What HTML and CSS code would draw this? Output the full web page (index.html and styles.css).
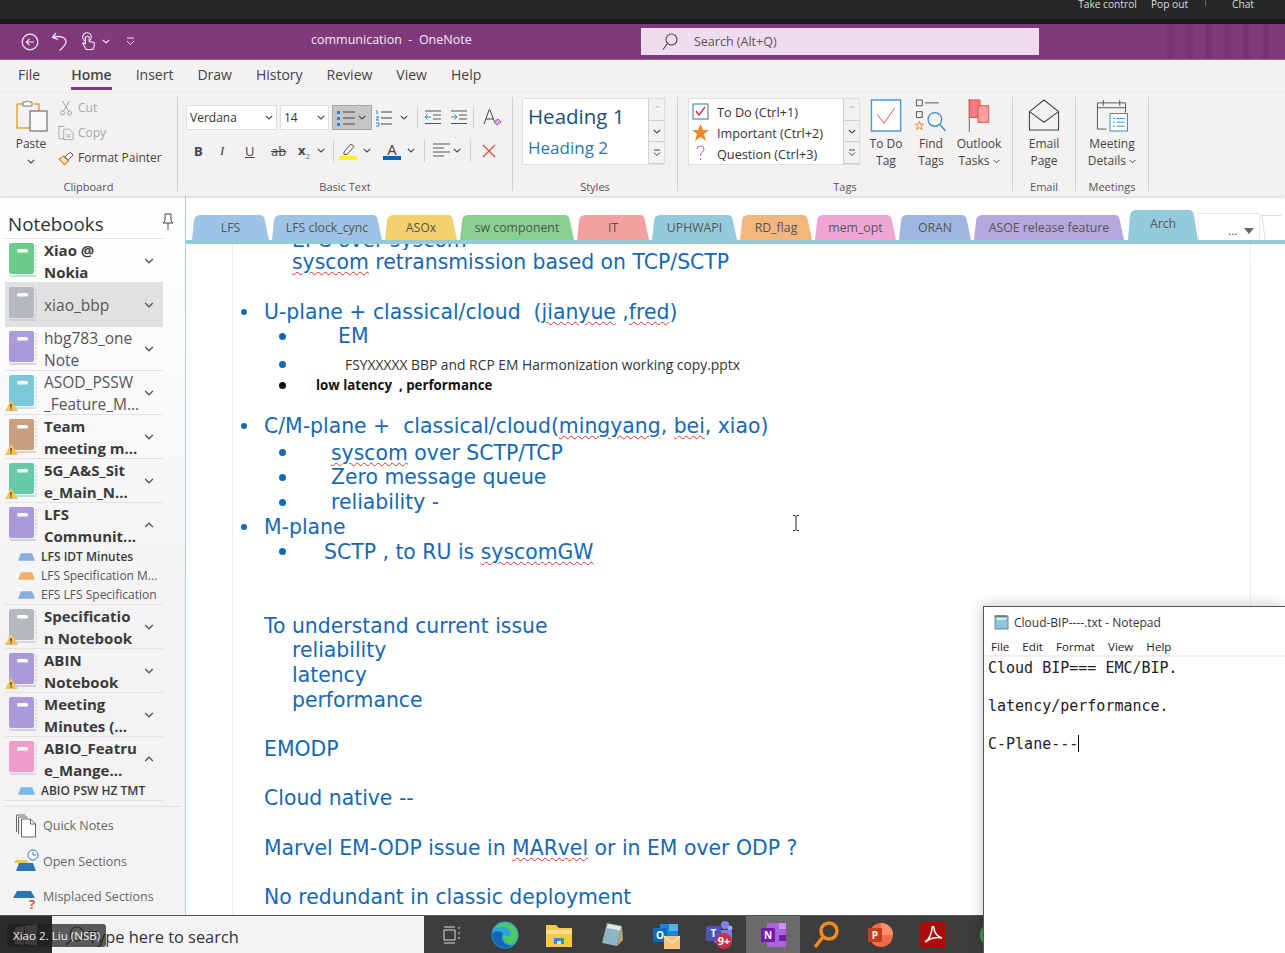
FILE: index.html
```html
<!DOCTYPE html>
<html lang="en">

<head>
    <meta charset="UTF-8">
    <title>communication - OneNote</title>
    <link rel="stylesheet" href="styles.css">
</head>

<body>
    <!-- shared icons -->
    <svg class="defs" width="0" height="0">
        <symbol id="book" viewBox="0 0 34 38">
            <path d="M5 33h26v2H7q-3 0-3-3z" fill="currentColor" opacity=".45"/>
            <rect x="4" y="1" width="25" height="31" rx="2" fill="currentColor"/>
            <rect x="12" y="7" width="11" height="3.5" rx="1.5" fill="#fff"/>
            <path d="M31 3v29" stroke="currentColor" stroke-width="1" stroke-dasharray="2 1.5" opacity=".7"/>
        </symbol>
        <symbol id="warn" viewBox="0 0 34 38">
            <path d="M6 26l7 11H0z" fill="#f0c35e"/>
            <path d="M6 30v3.500M6 34.500v1.200" stroke="#4a3a10" stroke-width="1.300"/>
        </symbol>
        <symbol id="section" viewBox="0 0 18 8">
            <path d="M3 0h12l3 8H0z" fill="currentColor"/>
        </symbol>
        <symbol id="chev" viewBox="0 0 8 5">
            <path d="M.8.8L4 4l3.200-3.200" fill="none" stroke="currentColor" stroke-width="1.100"/>
        </symbol>
    </svg>

    <div class="meeting-bar">
        <span>Take control</span>
        <span>Pop out</span>
        <i class="meeting-sep"></i>
        <span>Chat</span>
    </div>

    <header class="title-bar">
        <div class="quick-icons">
            <svg width="18" height="18" viewBox="0 0 18 18" fill="none" stroke="#f1e6f0" stroke-width="1.200"><circle cx="9" cy="9" r="7.800"/><path d="M13 9H5.500M8.500 5.800L5.300 9l3.200 3.200"/></svg>
            <svg width="18" height="20" viewBox="0 0 18 20" fill="none" stroke="#f1e6f0" stroke-width="1.300"><path d="M5 1L1.500 5.500 7 7.500M2 5.500c6-2 12-1 13 3.500 .7 3.500-3 6.500-6.500 9.500"/></svg>
            <svg width="14" height="20" viewBox="0 0 14 20" fill="none" stroke="#f1e6f0" stroke-width="1.100"><circle cx="6" cy="5" r="4.300"/><path d="M4.500 5v7l-2-1.500-.8 1 3.500 6h6.500l1.500-3v-4l-5-1V5q-1.800-1.500-3.700 0z" fill="#80397b"/></svg>
            <svg class="chev-sm" width="8" height="5"><use href="#chev"/></svg>
            <svg class="customize" width="9" height="9" viewBox="0 0 9 9" fill="none" stroke="#f1e6f0"><path d="M1 1h7M1 4l3.500 3.500L8 4"/></svg>
        </div>
        <div class="doc-title">communication &nbsp;-&nbsp; OneNote</div>
        <div class="search-box">
            <svg width="16" height="18" viewBox="0 0 16 18" fill="none" stroke="#444" stroke-width="1.100"><circle cx="9.500" cy="6.500" r="5.500"/><path d="M5.500 10.500L1 16.500"/></svg>
            <span>Search (Alt+Q)</span>
        </div>
        <div class="title-stripes"><i></i><i></i><i></i><i></i><i></i><i></i></div>
    </header>

    <nav class="menu-tabs">
        <a class="tab-file">File</a>
        <a class="active">Home</a>
        <a>Insert</a>
        <a>Draw</a>
        <a>History</a>
        <a>Review</a>
        <a>View</a>
        <a>Help</a>
    </nav>

    <section class="ribbon">
        <!-- Clipboard -->
        <div class="group group-clipboard">
            <div class="group-body clip-body">
                <div class="paste">
                    <svg width="33" height="33" viewBox="0 0 33 33" fill="none"><path d="M2 5h6M19 5h5v24H2V5" stroke="#e8a33d" stroke-width="1.500"/><path d="M8 7V3h3q1-3 3 0h3v4z" fill="#fff" stroke="#777"/><rect x="15" y="12" width="17" height="20" fill="#f8f8f8" stroke="#555"/></svg>
                    <span>Paste</span>
                    <svg class="chev-dark" width="8" height="5"><use href="#chev"/></svg>
                </div>
                <div class="clip-actions">
                    <div class="clip-item muted">
                        <svg width="16" height="16" viewBox="0 0 16 16" fill="none" stroke="#a8a8a8"><path d="M4 1l6 10M11 1L5 11"/><circle cx="4" cy="13" r="2"/><circle cx="11" cy="13" r="2"/></svg>
                        <span>Cut</span>
                    </div>
                    <div class="clip-item muted">
                        <svg width="18" height="16" viewBox="0 0 18 16" fill="none" stroke="#a8a8a8"><path d="M7 1H1v13h6M6 4h6l4 4v7H6z"/><path d="M9 10h4M9 12h4"/></svg>
                        <span>Copy</span>
                    </div>
                    <div class="clip-item">
                        <svg width="18" height="16" viewBox="0 0 18 16" fill="none"><path d="M1 9l5-3 5 5-4 4z" fill="#fbe3c6" stroke="#e07b20" stroke-width="1.200"/><path d="M7 7l6-5 3 3-5 5z" fill="#fff" stroke="#444"/></svg>
                        <span>Format Painter</span>
                    </div>
                </div>
            </div>
            <div class="group-label">Clipboard</div>
        </div>

        <!-- Basic Text -->
        <div class="group group-text">
            <div class="group-body text-body">
                <div class="text-row">
                    <div class="combo combo-font"><span>Verdana</span><svg width="8" height="5"><use href="#chev"/></svg></div>
                    <div class="combo combo-size"><span>14</span><svg width="8" height="5"><use href="#chev"/></svg></div>
                    <div class="list-btn selected">
                        <svg width="20" height="18" viewBox="0 0 20 18"><path d="M1 2h3v3H1zM1 8h3v3H1zM1 14h3v3H1z" fill="#1e88d2"/><path d="M7 3h12M7 9h12M7 15h12" stroke="#444"/></svg>
                        <svg width="8" height="5"><use href="#chev"/></svg>
                    </div>
                    <div class="list-btn">
                        <svg width="18" height="18" viewBox="0 0 18 18"><path d="M2 1v4M1 8h3L1 11h3M1 14h3v3H1" fill="none" stroke="#1e88d2"/><path d="M6 3h11M6 9h11M6 15h11" stroke="#444"/></svg>
                        <svg width="8" height="5"><use href="#chev"/></svg>
                    </div>
                    <i class="vsep vsep-list"></i>
                    <svg class="indent-out" width="17" height="16" viewBox="0 0 17 16" fill="none"><path d="M1 1h16M9 5h8M9 9h8M1 13.500h16" stroke="#555"/><path d="M7 7H1m2.500-2.500L1 7l2.500 2.500" stroke="#1e88d2"/></svg>
                    <svg class="indent-in" width="17" height="16" viewBox="0 0 17 16" fill="none"><path d="M1 1h16M9 5h8M9 9h8M1 13.500h16" stroke="#555"/><path d="M1 7h6M4.500 4.500L7 7 4.500 9.500" stroke="#1e88d2"/></svg>
                    <i class="vsep"></i>
                    <svg class="clear-fmt" width="18" height="18" viewBox="0 0 18 18" fill="none"><path d="M1 15L6 1h1l5 13M3 10h7" stroke="#444"/><path d="M11 13l4-3 3 3-4 3z" fill="#d9b5ec" stroke="#9a4fc0"/></svg>
                </div>
                <div class="text-row text-row-two">
                    <b class="fmt fmt-bold">B</b>
                    <i class="fmt fmt-italic">I</i>
                    <u class="fmt fmt-under">U</u>
                    <s class="fmt fmt-strike">ab</s>
                    <span class="fmt fmt-sub"><b>x</b><sub>2</sub></span>
                    <svg class="chev-tight" width="8" height="5"><use href="#chev"/></svg>
                    <i class="vsep vsep-narrow"></i>
                    <svg width="18" height="18" viewBox="0 0 18 18"><path d="M5 10l7-8 3 2.500-7 8H5z" fill="none" stroke="#555"/><rect y="14" width="18" height="4" fill="#ffee33"/></svg>
                    <svg class="chev-gap" width="8" height="5"><use href="#chev"/></svg>
                    <span class="font-color"><span>A</span></span>
                    <svg class="chev-tight" width="8" height="5"><use href="#chev"/></svg>
                    <i class="vsep vsep-wide"></i>
                    <svg width="17" height="15" viewBox="0 0 17 15"><path d="M0 1h17M0 5h11M0 9h17M0 13h11" stroke="#555"/></svg>
                    <svg class="chev-tight" width="8" height="5"><use href="#chev"/></svg>
                    <i class="vsep vsep-wide"></i>
                    <svg class="erase" width="14" height="14" viewBox="0 0 14 14"><path d="M1 1l12 12M13 1L1 13" stroke="#d9503f" stroke-width="1.300"/></svg>
                </div>
            </div>
            <div class="group-label">Basic Text</div>
        </div>

        <!-- Styles -->
        <div class="group group-styles">
            <div class="group-body">
                <div class="gallery gallery-styles">
                    <div class="gallery-items">
                        <div class="style-one">Heading 1</div>
                        <div class="style-two">Heading 2</div>
                    </div>
                    <div class="gallery-scroll"><span>&#8963;</span><span><svg width="8" height="5"><use href="#chev"/></svg></span><span><svg width="8" height="8" viewBox="0 0 8 8" fill="none" stroke="#444"><path d="M1 1h6M1 3.500l3 3 3-3"/></svg></span></div>
                </div>
            </div>
            <div class="group-label">Styles</div>
        </div>

        <!-- Tags -->
        <div class="group group-tags">
            <div class="group-body tags-body">
                <div class="gallery gallery-tags">
                    <div class="gallery-items tag-items">
                        <div class="tag-row">
                            <svg width="17" height="17" viewBox="0 0 17 17" fill="#fff"><rect x="1" y="1" width="15" height="15" stroke="#3a6f9c"/><path d="M4 8l3 4 6-8" fill="none" stroke="#c8272c" stroke-width="1.300"/></svg>
                            <span>To Do (Ctrl+1)</span>
                        </div>
                        <div class="tag-row">
                            <svg width="17" height="17" viewBox="0 0 17 17"><path d="M8.500 0l2.500 6h6l-5 4 2 7-5.500-4L3 17l2-7-5-4h6z" fill="#ee8a2c"/></svg>
                            <span>Important (Ctrl+2)</span>
                        </div>
                        <div class="tag-row">
                            <svg width="17" height="17" viewBox="0 0 17 17" fill="none" stroke="#a35fc4"><path d="M5 4q0-3 3.500-3T12 4q0 2-2 3.500T8.500 11M8.500 13v2"/></svg>
                            <span>Question (Ctrl+3)</span>
                        </div>
                    </div>
                    <div class="gallery-scroll"><span>&#8963;</span><span><svg width="8" height="5"><use href="#chev"/></svg></span><span><svg width="8" height="8" viewBox="0 0 8 8" fill="none" stroke="#444"><path d="M1 1h6M1 3.500l3 3 3-3"/></svg></span></div>
                </div>
                <div class="big-btn btn-todo">
                    <svg width="32" height="33" viewBox="0 0 32 34" fill="#fff"><rect x="1" y="1" width="30" height="32" stroke="#4a9ad4" stroke-width="1.500"/><path d="M7 16l7 9 11-16" fill="none" stroke="#d9503f"/></svg>
                    <span>To Do<br>Tag</span>
                </div>
                <div class="big-btn btn-find">
                    <svg width="32" height="33" viewBox="0 0 32 34" fill="none"><path d="M1 1h6v6H1zM1 13h6v6H1zM10 4h14" stroke="#555"/><path d="M4 23l1.300 3h3l-2.500 2 1 3.500L4 29.500 1.200 31.500l1-3.500L0 26h3z" fill="none" stroke="#e08a2c"/><circle cx="20" cy="21" r="7" stroke="#3a86c4" stroke-width="1.300"/><path d="M25 26l6 7" stroke="#3a86c4" stroke-width="1.300"/></svg>
                    <span>Find<br>Tags</span>
                </div>
                <div class="big-btn btn-tasks">
                    <svg width="24" height="33" viewBox="0 0 24 34"><path d="M2 0v34" stroke="#666"/><rect x="2" y="1" width="11" height="18" fill="#f47b85" stroke="#d9503f"/><rect x="11" y="7" width="11" height="17" fill="#f9a0a4" stroke="#d9503f"/></svg>
                    <span>Outlook<br>Tasks <svg width="7" height="5"><use href="#chev"/></svg></span>
                </div>
            </div>
            <div class="group-label">Tags</div>
        </div>

        <!-- Email -->
        <div class="group group-email">
            <div class="group-body">
                <div class="big-btn">
                    <svg width="32" height="33" viewBox="0 0 32 34" fill="none" stroke="#444" stroke-width="1.100"><path d="M1 13L16 1l15 12v19H1zM1 13l15 11 15-11"/></svg>
                    <span>Email<br>Page</span>
                </div>
            </div>
            <div class="group-label">Email</div>
        </div>

        <!-- Meetings -->
        <div class="group group-meetings">
            <div class="group-body">
                <div class="big-btn">
                    <svg width="34" height="33" viewBox="0 0 34 34" fill="none"><path d="M11 31H2V4h29v10M2 9h29M8 1v6M25 1v6" stroke="#555"/><rect x="15" y="15" width="18" height="18" fill="#fff" stroke="#3a86c4"/><path d="M18 20h2M22 20h8M18 24h2M22 24h8M18 28h2M22 28h8" stroke="#3a86c4"/></svg>
                    <span>Meeting<br>Details <svg width="7" height="5"><use href="#chev"/></svg></span>
                </div>
            </div>
            <div class="group-label">Meetings</div>
        </div>
    </section>

    <div class="workspace">
        <aside class="sidebar">
            <div class="side-head">
                <span>Notebooks</span>
                <svg width="12" height="17" viewBox="0 0 12 17" fill="none" stroke="#444"><path d="M3 1h6v7l2 2H1l2-2zM6 10v7"/></svg>
            </div>
            <div class="notebook-list">
                <div class="nb bold green"><span class="nb-icon"><svg width="34" height="38"><use href="#book"/></svg></span><span class="nb-name">Xiao @<br>Nokia</span><svg class="nb-chev" width="10" height="6"><use href="#chev"/></svg></div>
                <div class="nb grey selected"><span class="nb-icon"><svg width="34" height="38"><use href="#book"/></svg></span><span class="nb-name">xiao_bbp</span><svg class="nb-chev" width="10" height="6"><use href="#chev"/></svg></div>
                <div class="nb violet"><span class="nb-icon"><svg width="34" height="38"><use href="#book"/></svg></span><span class="nb-name">hbg783_one<br>Note</span><svg class="nb-chev" width="10" height="6"><use href="#chev"/></svg></div>
                <div class="nb teal"><span class="nb-icon"><svg width="34" height="38"><use href="#book"/><use href="#warn"/></svg></span><span class="nb-name">ASOD_PSSW<br>_Feature_M...</span><svg class="nb-chev" width="10" height="6"><use href="#chev"/></svg></div>
                <div class="nb bold tan"><span class="nb-icon"><svg width="34" height="38"><use href="#book"/><use href="#warn"/></svg></span><span class="nb-name">Team<br>meeting m...</span><svg class="nb-chev" width="10" height="6"><use href="#chev"/></svg></div>
                <div class="nb bold mint"><span class="nb-icon"><svg width="34" height="38"><use href="#book"/><use href="#warn"/></svg></span><span class="nb-name">5G_A&amp;S_Sit<br>e_Main_N...</span><svg class="nb-chev" width="10" height="6"><use href="#chev"/></svg></div>
                <div class="nb bold violet open"><span class="nb-icon"><svg width="34" height="38"><use href="#book"/></svg></span><span class="nb-name">LFS<br>Communit...</span><svg class="nb-chev up" width="10" height="6"><use href="#chev"/></svg></div>
                <div class="sec-group">
                    <div class="sec bold"><svg class="blue" width="17" height="8"><use href="#section"/></svg>LFS IDT Minutes</div>
                    <div class="sec"><svg class="orange" width="17" height="8"><use href="#section"/></svg>LFS Specification M...</div>
                    <div class="sec"><svg class="blue" width="17" height="8"><use href="#section"/></svg>EFS LFS Specification</div>
                </div>
                <div class="nb bold grey"><span class="nb-icon"><svg width="34" height="38"><use href="#book"/><use href="#warn"/></svg></span><span class="nb-name">Specificatio<br>n Notebook</span><svg class="nb-chev" width="10" height="6"><use href="#chev"/></svg></div>
                <div class="nb bold violet"><span class="nb-icon"><svg width="34" height="38"><use href="#book"/><use href="#warn"/></svg></span><span class="nb-name">ABIN<br>Notebook</span><svg class="nb-chev" width="10" height="6"><use href="#chev"/></svg></div>
                <div class="nb bold violet"><span class="nb-icon"><svg width="34" height="38"><use href="#book"/></svg></span><span class="nb-name">Meeting<br>Minutes (...</span><svg class="nb-chev" width="10" height="6"><use href="#chev"/></svg></div>
                <div class="nb bold pink open"><span class="nb-icon"><svg width="34" height="38"><use href="#book"/></svg></span><span class="nb-name">ABIO_Featru<br>e_Mange...</span><svg class="nb-chev up" width="10" height="6"><use href="#chev"/></svg></div>
                <div class="sec-group">
                    <div class="sec bold"><svg class="sky" width="17" height="8"><use href="#section"/></svg>ABIO PSW HZ TMT</div>
                </div>
            </div>
            <div class="side-links">
                <div class="side-link">
                    <svg width="21" height="24" viewBox="0 0 21 24" fill="none" stroke="#666"><path d="M1 18V1h9M3 20V3h9"/><path d="M6 23V5h9l5 5v13z" fill="#fff"/><path d="M15 5v5h5"/></svg>
                    <span>Quick Notes</span>
                </div>
                <div class="side-link">
                    <svg width="26" height="24" viewBox="0 0 26 24"><path d="M3 11h10l3 3H1z" fill="#f0c35e"/><path d="M6 15h14l3 8H3z" fill="#2e75b5" transform="translate(0 -1)"/><circle cx="20" cy="6" r="5" fill="#fff" stroke="#2e75b5"/><path d="M20 3v3h3" fill="none" stroke="#2e75b5"/></svg>
                    <span>Open Sections</span>
                </div>
                <div class="side-link">
                    <svg width="26" height="24" viewBox="0 0 26 24"><path d="M4 6h14l4 7H0z" fill="#2e75b5"/><text x="16" y="24" class="q-mark">?</text></svg>
                    <span>Misplaced Sections</span>
                </div>
            </div>
        </aside>

        <main class="note-area">
            <div class="section-tabs">
                <div class="stab blue-tab tw-75">LFS</div>
                <div class="stab blue-tab tw-110">LFS clock_cync</div>
                <div class="stab yellow-tab tw-72">ASOx</div>
                <div class="stab green-tab tw-114">sw component</div>
                <div class="stab red-tab tw-72">IT</div>
                <div class="stab teal-tab tw-85">UPHWAPI</div>
                <div class="stab orange-tab tw-72">RD_flag</div>
                <div class="stab pink-tab tw-81">mem_opt</div>
                <div class="stab periwinkle-tab tw-72">ORAN</div>
                <div class="stab lilac-tab tw-150">ASOE release feature</div>
                <div class="stab teal-tab tw-70 stab-active">Arch</div>
                <div class="stab-more">... <span class="more-arrow"></span></div>
                <div class="stab-edge"></div>
            </div>
            <div class="note-frame">
                <article class="note-sheet">
                    <div class="line cut-line lvl-sub"><span>EPC over <span class="sq">syscom</span></span></div>
                    <div class="line lvl-sub"><span><span class="sq">syscom</span> retransmission based on TCP/SCTP</span></div>
                    <div class="line blank"></div>
                    <div class="line lvl-one"><i class="dot"></i><span>U-plane + classical/cloud &nbsp;(<span class="sq">jianyue</span> ,<span class="sq">fred</span>)</span></div>
                    <div class="line lvl-two"><i class="dot dot-big"></i><span class="in-em">EM</span></div>
                    <div class="line lvl-two doc-line"><i class="dot dot-big"></i><span class="in-doc">FSYXXXXX BBP and RCP EM Harmonization working copy.pptx</span></div>
                    <div class="line lvl-two bold-line"><i class="dot dot-big dot-black"></i><span class="in-low">low latency &nbsp;, performance</span></div>
                    <div class="line gap-small"></div>
                    <div class="line lvl-one cm-line"><i class="dot"></i><span>C/M-plane + &nbsp;classical/cloud(<span class="sq">mingyang</span>, <span class="sq">bei</span>, xiao)</span></div>
                    <div class="line lvl-two"><i class="dot dot-big"></i><span class="in-sys"><span class="sq">syscom</span> over SCTP/TCP</span></div>
                    <div class="line lvl-two"><i class="dot dot-big"></i><span class="in-sys">Zero message queue</span></div>
                    <div class="line lvl-two"><i class="dot dot-big"></i><span class="in-sys">reliability -</span></div>
                    <div class="line lvl-one"><i class="dot"></i><span>M-plane</span></div>
                    <div class="line lvl-two"><i class="dot dot-big"></i><span class="in-sctp">SCTP , to RU is <span class="sq">syscomGW</span></span></div>
                    <div class="line blank"></div>
                    <div class="line blank"></div>
                    <div class="line lvl-head"><span>To understand current issue</span></div>
                    <div class="line lvl-sub"><span>reliability</span></div>
                    <div class="line lvl-sub"><span>latency</span></div>
                    <div class="line lvl-sub"><span>performance</span></div>
                    <div class="line blank"></div>
                    <div class="line lvl-head"><span>EMODP</span></div>
                    <div class="line blank"></div>
                    <div class="line lvl-head"><span>Cloud native --</span></div>
                    <div class="line blank"></div>
                    <div class="line lvl-head"><span>Marvel EM-ODP issue in <span class="sq">MARvel</span> or in EM over ODP ?</span></div>
                    <div class="line blank"></div>
                    <div class="line lvl-head"><span>No redundant in classic deployment</span></div>
                </article>
            </div>
        </main>
    </div>

    <footer class="taskbar">
        <div class="start-btn">
            <svg width="22" height="22" viewBox="0 0 22 22" fill="#8a8a8a"><path d="M0 3l9-1v9H0zM10 2l12-2v11H10zM0 12h9v9l-9-1zM10 12h12v10l-12-2z"/></svg>
        </div>
        <div class="task-search">
            <svg width="22" height="22" viewBox="0 0 22 22" fill="none" stroke="#333" stroke-width="1.200"><circle cx="13" cy="9" r="7"/><path d="M8 14l-6 6"/></svg>
            <span>Type here to search</span>
        </div>
        <div class="task-icons">
            <span class="task-icon"><svg width="20" height="18" viewBox="0 0 20 18" fill="none" stroke="#ddd"><path d="M2 1h11M2 17h11M2 4h11v10H2zM17 1v2M17 6v2M17 11v2"/></svg></span>
            <span class="task-icon"><svg width="28" height="28" viewBox="0 0 28 28"><circle cx="14" cy="14" r="13.500" fill="#2ba6d8"/><path d="M27 15A13 13 0 0 0 3 8c5-4 16-3 17 5 0 3-6 3-7 1-2 6 4 10 8 9q5-3 6-8z" fill="#4fc95f"/><path d="M1 13c0 8 6 14 13 14 3 0 5-1 7-3-6 1-13-4-9-12-4-3-9-2-11 1z" fill="#1466b8"/></svg></span>
            <span class="task-icon"><svg width="26" height="24" viewBox="0 0 26 24"><path d="M0 2h10l3 3h13v19H0z" fill="#f7c948"/><path d="M0 7h26v4H0z" fill="#fbe08a"/><path d="M8 15h10v6H8z" fill="#2b8fd0"/><path d="M11 18h4v3h-4z" fill="#f7e7a8"/></svg></span>
            <span class="task-icon"><svg width="24" height="26" viewBox="0 0 24 26"><path d="M7 1l15 3-5 20-15-3z" fill="#8db6c4"/><path d="M8 2l13 2.500-1 4L7 6z" fill="#dfe9ea"/><path d="M17 24l5-20 1 14z" fill="#b9a66f"/></svg></span>
            <span class="task-icon"><svg width="28" height="28" viewBox="0 0 28 28"><path d="M8 3h18v14H8z" fill="#1b86d8"/><path d="M17 3h9v7h-9z" fill="#4fb4ec"/><rect x="1" y="7" width="14" height="14" rx="1" fill="#0f6cbd"/><text x="8" y="18" class="icon-letter">O</text><rect x="12" y="15" width="16" height="13" fill="#f5c27e"/><path d="M12 15l8 7 8-7" fill="none" stroke="#fff"/></svg></span>
            <span class="task-icon"><svg width="28" height="28" viewBox="0 0 28 28"><circle cx="20" cy="4" r="4" fill="#7b83eb"/><circle cx="25" cy="7" r="2.500" fill="#a1a6f0"/><rect x="9" y="9" width="18" height="13" rx="2" fill="#7b83eb"/><rect x="1" y="5" width="15" height="15" rx="1" fill="#4b53bc"/><text x="8.500" y="16" class="icon-letter">T</text><circle cx="19" cy="20" r="8" fill="#c4314b"/><text x="19" y="24" class="badge-text">9+</text></svg></span>
            <span class="task-icon task-active"><svg width="26" height="26" viewBox="0 0 26 26"><rect x="7" y="1" width="19" height="24" rx="1" fill="#a866d8"/><path d="M19 1h7v6h-7z" fill="#ca92ec"/><path d="M19 13h7v6h-7z" fill="#7719aa"/><rect x="1" y="6" width="14" height="14" rx="1" fill="#7719aa"/><text x="8" y="17" class="icon-letter">N</text></svg></span>
            <span class="task-icon"><svg width="26" height="28" viewBox="0 0 26 28" fill="none" stroke="#f58a1f" stroke-width="3.500"><circle cx="16" cy="10" r="8"/><path d="M10 16L2 26"/></svg></span>
            <span class="task-icon"><svg width="26" height="26" viewBox="0 0 26 26"><circle cx="14" cy="13" r="12" fill="#ed6c47"/><path d="M14 1a12 12 0 0 1 12 12H14z" fill="#ff8f6b"/><rect x="1" y="6" width="14" height="14" rx="1" fill="#c43e1c"/><text x="8" y="17" class="icon-letter">P</text></svg></span>
            <span class="task-icon"><svg width="26" height="26" viewBox="0 0 26 26"><rect width="26" height="26" rx="3" fill="#ad0b0b"/><path d="M5 20c4-2 7-9 7-14 0-2 2-2 2 0 0 5 4 9 8 10-5-1-12 0-15 3z" fill="none" stroke="#fff" stroke-width="1.500"/></svg></span>
            <span class="task-icon task-cut"><svg width="14" height="26" viewBox="0 0 14 26"><path d="M13 0a13 13 0 0 0 0 26z" fill="#3da34d"/><path d="M13 0a13 13 0 0 0-11 6l5 7q2-4 6-4z" fill="#d93a2b"/></svg></span>
        </div>
    </footer>

    <!-- things lying over the app -->
    <div class="notepad">
        <div class="np-title">
            <svg width="16" height="16" viewBox="0 0 16 16"><rect x="2" y="2" width="13" height="13" fill="#8ec5d8" stroke="#5f8ea0"/><path d="M3 1v2M5 1v2M7 1v2M9 1v2M11 1v2M13 1v2" stroke="#555"/><path d="M4 5h9" stroke="#dcecf2" stroke-width="2"/></svg>
            <span>Cloud-BIP----.txt - Notepad</span>
        </div>
        <div class="np-menu"><span>File</span><span>Edit</span><span>Format</span><span>View</span><span>Help</span></div>
        <pre class="np-text">Cloud BIP=== EMC/BIP.

latency/performance.

C-Plane---<i class="caret"></i></pre>
    </div>

    <svg class="ibeam" width="8" height="16" viewBox="0 0 8 16" fill="none" stroke="#222"><path d="M1 .5h2l1 1 1-1h2M4 1.500v13M1 15.500h2l1-1 1 1h2"/></svg>

    <div class="name-tag">Xiao 2. Liu (NSB)</div>
</body>

</html>
```

FILE: styles.css
```css
* {
    box-sizing: border-box;
}

html,
body {
    margin: 0;
    height: 953px;
    overflow: hidden;
}

body {
    position: relative;
    display: flex;
    flex-direction: column;
    font-family: "Open Sans", "Noto Sans", sans-serif;
    color: #444;
    background: #f3f2f1;
}

.defs {
    position: absolute;
}

svg {
    flex: none;
    display: block;
}

/* meeting bar */
.meeting-bar {
    height: 24px;
    flex: none;
    display: flex;
    justify-content: flex-end;
    align-items: flex-start;
    padding-right: 31px;
    background: linear-gradient(#272727 19px, #1b1b1b 19px);
    color: #ddd;
    font-size: 10.2px;
    line-height: 8px;
    overflow: hidden;
}

.meeting-bar span {
    margin-left: 14px;
}

.meeting-sep {
    width: 1px;
    height: 6px;
    margin: 0 2px 0 17px;
    background: #666;
}

.meeting-bar span:last-child {
    margin-left: 24px;
}

/* title bar */
.title-bar {
    position: relative;
    height: 36px;
    flex: none;
    display: flex;
    align-items: center;
    background: #80397b;
    border-bottom: 1px solid #9a6696;
    color: #f5eaf4;
}

.quick-icons {
    width: 311px;
    display: flex;
    align-items: center;
    padding-left: 21px;
    gap: 12px;
}

.chev-sm {
    color: #f1e6f0;
    margin-left: -5px;
}

.customize {
    margin-left: 4px;
}

.doc-title {
    width: 330px;
    font-size: 12.5px;
    margin-top: -5px;
}

.search-box {
    width: 398px;
    height: 27px;
    display: flex;
    align-items: center;
    gap: 16px;
    padding-left: 21px;
    background: #f0dcef;
    color: #555;
    font-size: 12.5px;
}

.title-stripes {
    display: flex;
    margin-left: 128px;
    height: 35px;
    gap: 12px;
}

.title-stripes i {
    width: 7px;
    background: rgba(60, 20, 60, .12);
}

/* menu tabs */
.menu-tabs {
    height: 33px;
    flex: none;
    display: flex;
    gap: 24px;
    padding: 5px 0 0 18px;
    font-size: 14px;
    color: #444;
}

.menu-tabs a {
    height: 25px;
    line-height: 20px;
}

.menu-tabs .tab-file {
    margin-right: 7px;
}

.menu-tabs .active {
    font-weight: 600;
    border-bottom: 3px solid #80397b;
}

/* ribbon */
.ribbon {
    height: 103px;
    flex: none;
    display: flex;
    padding-top: 4px;
    box-shadow: 0 1px 3px rgba(0, 0, 0, .2);
    position: relative;
}

.group {
    display: flex;
    flex-direction: column;
    border-right: 1px solid #d2d0ce;
    height: 94px;
    font-size: 12px;
}

.group-body {
    height: 81px;
    flex: none;
    display: flex;
}

.group-label {
    height: 13px;
    text-align: center;
    font-size: 11px;
    line-height: 17px;
    color: #555;
}

.group-clipboard {
    width: 178px;
}

.group-text {
    width: 335px;
}

.group-styles {
    width: 165px;
}

.group-tags {
    width: 335px;
}

.group-email {
    width: 63px;
}

.group-meetings {
    width: 73px;
}

.clip-body {
    padding: 2px 0 0 13px;
}

.paste {
    width: 36px;
    display: flex;
    flex-direction: column;
    align-items: center;
    font-size: 12px;
    line-height: 16px;
}

.paste span {
    margin-top: 4px;
}

.chev-dark {
    margin-top: 7px;
    color: #444;
}

.clip-actions {
    margin-left: 9px;
    display: flex;
    flex-direction: column;
    margin-top: -4px;
}

.clip-item {
    height: 25px;
    flex: none;
    display: flex;
    align-items: center;
    gap: 3px;
    font-size: 12px;
}

.clip-item svg {
    width: 17px;
}

.muted {
    color: #a8a8a8;
}

.text-body {
    flex-direction: column;
    padding: 8px 0 0 8px;
}

.text-row {
    height: 25px;
    flex: none;
    display: flex;
    align-items: center;
}

.text-row svg {
    color: #444;
}

.text-row-two {
    margin-top: 8px;
    padding-left: 8px;
}

.combo {
    height: 25px;
    display: flex;
    align-items: center;
    justify-content: space-between;
    padding: 0 3px;
    background: #fff;
    border: 1px solid #e1dfdd;
    font-size: 12px;
    color: #333;
}

.combo-font {
    width: 91px;
}

.combo-size {
    width: 49px;
    margin: 0 3px;
}

.list-btn {
    width: 40px;
    height: 25px;
    display: flex;
    align-items: center;
    justify-content: space-between;
    padding: 0 5px 0 3px;
}

.list-btn.selected {
    background: #c8c6c4;
    border: 1px solid #a6a6a6;
}

.list-btn + .list-btn {
    width: 41px;
}

.vsep {
    width: 1px;
    height: 22px;
    margin: 0 6px;
    background: #d2d0ce;
}

.vsep-list {
    margin-left: 4px;
}

.indent-in {
    margin-left: 9px;
}

.clear-fmt {
    margin-left: 3px;
}

.fmt {
    display: block;
    color: #444;
    font-size: 13px;
    width: 26px;
    font-family: "Liberation Serif", serif;
}

.fmt-bold {
    font-family: "Open Sans", sans-serif;
}

.fmt-italic {
    width: 25px;
}

.fmt-under {
    font-family: "Open Sans", sans-serif;
}

.fmt-strike {
    font-family: "Open Sans", sans-serif;
    width: 27px;
}

.fmt-sub {
    font-family: "Open Sans", sans-serif;
    width: 16px;
}

.fmt-sub sub {
    color: #1e88d2;
    font-size: 8px;
}

.chev-tight {
    margin-left: 3px;
}

.vsep-narrow {
    margin: 0 5px 0 8px;
}

.vsep-wide {
    margin: 0 8px 0 9px;
}

.chev-gap {
    margin: 0 12px 0 6px;
}

.font-color {
    width: 18px;
    height: 18px;
    text-align: center;
    font-size: 15px;
    line-height: 15px;
    border-bottom: 4px solid #0563c1;
}

.font-color + .chev-tight {
    margin-left: 6px;
}

.erase {
    margin-left: 3px;
}

.gallery {
    height: 67px;
    display: flex;
    background: #fff;
    border: 1px solid #e1dfdd;
}

.gallery-items {
    flex: 1;
}

.gallery-styles {
    width: 143px;
    margin: 1px 0 0 9px;
}

.gallery-tags {
    width: 172px;
    margin: 1px 0 0 10px;
}

.gallery-scroll {
    width: 16px;
    display: flex;
    flex-direction: column;
    background: #f3f2f1;
    border-left: 1px solid #d2d0ce;
}

.gallery-scroll span {
    flex: 1;
    display: flex;
    align-items: center;
    justify-content: center;
    color: #444;
    border-bottom: 1px solid #d2d0ce;
    font-size: 10px;
}

.gallery-scroll span:first-child {
    color: #bbb;
}

.style-one {
    padding: 3px 0 0 5px;
    font-size: 20.5px;
    line-height: 28px;
    color: #1f4e79;
}

.style-two {
    padding: 5px 0 0 5px;
    font-size: 17px;
    line-height: 26px;
    color: #2e75b5;
}

.tag-items {
    padding-top: 2px;
}

.tag-row {
    height: 21px;
    display: flex;
    align-items: center;
    gap: 8px;
    padding-left: 3px;
    font-size: 12.7px;
    white-space: nowrap;
    color: #333;
}

.tags-body {
    align-items: flex-start;
}

.big-btn {
    display: flex;
    flex-direction: column;
    align-items: center;
    font-size: 12px;
    line-height: 17px;
    text-align: center;
    color: #444;
}

.big-btn svg {
    margin-bottom: 3px;
}

.big-btn span svg {
    display: inline;
    margin: 0 0 1px;
    color: #444;
}

.group-tags .big-btn {
    padding-top: 2px;
}

.btn-todo {
    width: 36px;
    margin-left: 8px;
}

.btn-find {
    width: 38px;
    margin-left: 8px;
}

.btn-tasks {
    width: 50px;
    margin-left: 4px;
}

.group-email .big-btn {
    width: 100%;
    padding-top: 2px;
}

.group-meetings .big-btn {
    width: 100%;
    padding-top: 2px;
}

/* workspace */
.workspace {
    flex: 1;
    min-height: 0;
    display: flex;
    background: #fff;
}

.sidebar {
    width: 186px;
    flex: none;
    padding: 14px 0 0 5px;
    background: linear-gradient(#fff, #f3f3f3 60%);
    border-right: 1px solid #a9d5e2;
}

.side-head {
    width: 158px;
    height: 29px;
    display: flex;
    justify-content: space-between;
    align-items: flex-start;
    padding-left: 3px;
    margin-right: 0;
    border-bottom: 1px solid #e1e1e1;
    font-size: 18.8px;
    line-height: 29px;
    color: #333;
    position: relative;
}

.side-head svg {
    margin: 3px -11px 0 0;
}

.nb {
    width: 158px;
    height: 44px;
    display: flex;
    align-items: center;
    border-bottom: 1px solid #e1e1e1;
    font-size: 15.500px;
    line-height: 22px;
    color: #555;
}

.nb.bold {
    font-size: 15px;
    font-weight: 700;
    color: #3a3a3a;
}

.nb.selected {
    background: #e1e1e1;
}

.nb-icon {
    width: 39px;
    flex: none;
    color: var(--book);
}

.nb-name {
    flex: 1;
    white-space: nowrap;
    overflow: hidden;
}

.nb-chev {
    margin-right: 9px;
    color: #555;
}

.nb-chev.up {
    transform: rotate(180deg);
}

.nb.open {
    border-bottom: 0;
}

.nb.green {
    --book: #6bcb8b;
}

.nb.grey {
    --book: #b4b9bf;
}

.nb.violet {
    --book: #a99bd9;
}

.nb.teal {
    --book: #7cc8d8;
}

.nb.tan {
    --book: #c9a07f;
}

.nb.mint {
    --book: #66c9a8;
}

.nb.pink {
    --book: #ef9ecb;
}

.sec-group {
    width: 158px;
    border-bottom: 1px solid #e1e1e1;
}

.sec {
    height: 19px;
    display: flex;
    align-items: center;
    gap: 6px;
    padding-left: 13px;
    font-size: 12px;
    white-space: nowrap;
    color: #555;
}

.sec.bold {
    font-weight: 600;
    color: #3a3a3a;
}

.blue {
    color: #8dace0;
}

.orange {
    color: #f2ae6b;
}

.sky {
    color: #7cb8e8;
}

.side-links {
    margin-top: 5px;
    width: 176px;
    border-top: 1px solid #e1e1e1;
    padding-top: 1px;
}

.side-link {
    height: 35.500px;
    display: flex;
    align-items: center;
    gap: 4px;
    padding-left: 8px;
    font-size: 12.500px;
    color: #666;
}

.side-link svg {
    width: 26px;
}

.q-mark {
    font-size: 13px;
    font-weight: 700;
    fill: #d9503f;
}

/* note area */
.note-area {
    flex: 1;
    min-width: 0;
    display: flex;
    flex-direction: column;
}

.section-tabs {
    height: 48px;
    flex: none;
    display: flex;
    align-items: flex-end;
    gap: 3px;
    padding-left: 6px;
    border-bottom: 4px solid #93cbdb;
    overflow: hidden;
}

.stab {
    height: 25px;
    flex: none;
    text-align: center;
    font-size: 12.300px;
    line-height: 26px;
    color: #555;
    clip-path: polygon(0 100%, 2px 6px, 3px 2px, 7px 0, calc(100% - 8px) 0, calc(100% - 5px) 2px, calc(100% - 4px) 6px, 100% 100%);
}

.stab-active {
    height: 30px;
    line-height: 28px;
    margin-left: 1px;
}

.tw-70 {
    width: 70px;
}

.tw-72 {
    width: 72px;
}

.tw-75 {
    width: 77px;
}

.tw-81 {
    width: 81px;
}

.tw-85 {
    width: 85px;
}

.tw-110 {
    width: 110px;
}

.tw-114 {
    width: 114px;
}

.tw-150 {
    width: 150px;
}

.blue-tab {
    background: #9dc3e6;
}

.yellow-tab {
    background: #f2d06b;
}

.green-tab {
    background: #88d08f;
}

.red-tab {
    background: #f2a0a0;
}

.teal-tab {
    background: #93cbdb;
}

.orange-tab {
    background: #f2b77d;
}

.pink-tab {
    background: #f0a6d4;
}

.periwinkle-tab {
    background: #9fb5e2;
}

.lilac-tab {
    background: #b5a8dd;
}

.stab-more {
    width: 62px;
    height: 27px;
    margin-left: -3px;
    flex: none;
    padding: 7px 0 0 29px;
    font-size: 12px;
    color: #555;
    display: flex;
    align-items: center;
    gap: 7px;
    background: #fff;
    border: 1px solid #e8e8e8;
    border-bottom: 0;
}

.more-arrow {
    width: 0;
    height: 0;
    border: 5px solid transparent;
    border-top: 6px solid #666;
    border-bottom: 0;
}

.stab-edge {
    width: 20px;
    height: 25px;
    border-left: 1px solid #ddd;
    border-top: 1px solid #ddd;
    transform: skewX(8deg);
}

.note-frame {
    flex: 1;
    min-height: 0;
    overflow: hidden;
    padding-left: 46px;
}

.note-sheet {
    width: 1019px;
    height: 100%;
    border-left: 1px solid #ededed;
    border-right: 1px solid #ededed;
    color: #1668b3;
    font-family: "DejaVu Sans", Verdana, sans-serif;
    font-size: 20.400px;
}

.line {
    height: 24.700px;
    display: flex;
    align-items: center;
    white-space: pre;
}

.cut-line {
    height: 6px;
    padding-bottom: 6px;
    align-items: flex-end;
    overflow: hidden;
    line-height: 8px;
}

.lvl-sub {
    padding-left: 59px;
}

.lvl-one {
    padding-left: 8px;
}

.lvl-head {
    padding-left: 31px;
}

.lvl-two {
    padding-left: 46px;
}

.cm-line {
    margin-bottom: 2px;
}

.dot {
    width: 6px;
    height: 6px;
    margin-right: 17px;
    border-radius: 50%;
    background: #1668b3;
    flex: none;
}

.dot-big {
    width: 7px;
    height: 7px;
    margin-right: 0;
}

.dot-black {
    background: #111;
}

.in-em {
    margin-left: 52px;
}

.in-sys {
    margin-left: 45px;
}

.in-sctp {
    margin-left: 38px;
}

.in-doc {
    margin-left: 59px;
}

.in-low {
    margin-left: 30px;
}

.doc-line {
    height: 28px;
    padding-top: 3px;
    color: #333;
    font-family: "Open Sans", sans-serif;
    font-size: 13.850px;
}

.doc-line .dot {
    background: #1668b3;
}

.bold-line {
    height: 21px;
    padding-bottom: 4px;
    color: #111;
    font-family: "Open Sans", sans-serif;
    font-size: 13.300px;
    font-weight: 700;
}

.gap-small {
    height: 16px;
}

.sq {
    text-decoration: underline wavy #e0302a;
    text-decoration-thickness: 1px;
    text-underline-offset: 2px;
}

/* taskbar */
.taskbar {
    height: 38px;
    flex: none;
    display: flex;
    background: #3d3d3d;
    border-top: 1px solid #555;
}

.start-btn {
    width: 52px;
    display: flex;
    align-items: center;
    padding-left: 15px;
    background: #2b2b2b;
}

.task-search {
    width: 372px;
    display: flex;
    align-items: center;
    padding: 3px 0 0 12px;
    background: #f3f3f3;
    color: #333;
    font-size: 16.400px;
}

.task-search span {
    margin-left: 2px;
}

.task-icons {
    display: flex;
    padding-left: 1px;
}

.task-icon {
    width: 53.500px;
    height: 37px;
    display: flex;
    align-items: center;
    justify-content: center;
}

.task-active {
    background: #6a6a6a;
}

.task-cut {
    justify-content: flex-start;
    padding-left: 20px;
}

.icon-letter {
    font-family: "Open Sans", sans-serif;
    font-size: 10px;
    font-weight: 700;
    fill: #fff;
    text-anchor: middle;
}

.badge-text {
    font-family: "Open Sans", sans-serif;
    font-size: 11px;
    font-weight: 700;
    fill: #fff;
    text-anchor: middle;
}

/* notepad window */
.notepad {
    position: absolute;
    left: 983px;
    top: 606px;
    width: 302px;
    height: 347px;
    background: #fff;
    border: 1px solid #555;
    border-right: 0;
    border-bottom: 0;
    box-shadow: -2px -2px 12px rgba(0, 0, 0, .18);
}

.np-title {
    height: 30px;
    display: flex;
    align-items: center;
    gap: 5px;
    padding-left: 9px;
    font-size: 12px;
    color: #333;
}

.np-menu {
    height: 20px;
    display: flex;
    gap: 13px;
    padding-left: 7px;
    font-size: 11.600px;
    line-height: 20px;
    color: #222;
    border-bottom: 2px solid #f0f0f0;
}

.np-text {
    margin: 0;
    padding: 2px 0 0 4px;
    font-family: "DejaVu Sans Mono", monospace;
    font-size: 15px;
    line-height: 19px;
    color: #222;
}

.caret {
    display: inline-block;
    width: 1px;
    height: 17px;
    margin-bottom: -3px;
    background: #000;
}

.ibeam {
    position: absolute;
    left: 792px;
    top: 515px;
}

.name-tag {
    position: absolute;
    left: 7px;
    top: 924px;
    width: 99px;
    height: 23px;
    padding-left: 6px;
    border-radius: 3px;
    background: rgba(30, 30, 30, .72);
    color: #eee;
    font-size: 11.600px;
    line-height: 23px;
    white-space: nowrap;
}
```
